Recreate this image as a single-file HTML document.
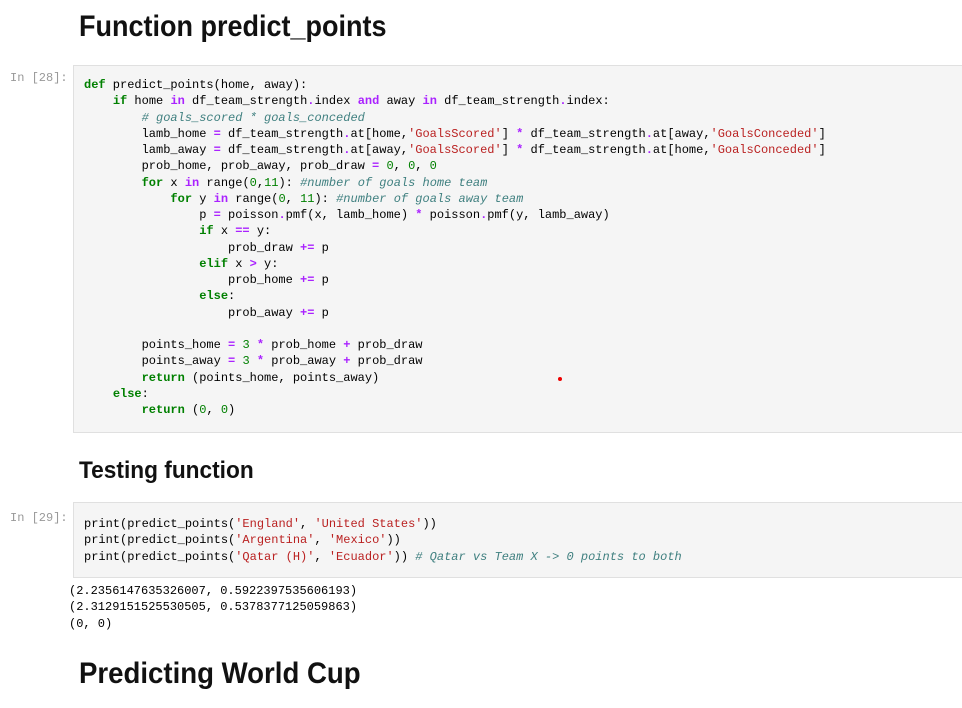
<!DOCTYPE html>
<html><head><meta charset="utf-8">
<style>
body{margin:0;width:962px;height:708px;background:#fff;position:relative;overflow:hidden;font-family:"Liberation Sans",sans-serif;}
.h{position:absolute;left:79px;font-weight:bold;color:#111;white-space:nowrap;transform-origin:0 0;}
.box{position:absolute;left:73px;right:-2px;background:#f5f5f5;border:1px solid #e0e0e0;}
pre{margin:0;font-family:"Liberation Mono",monospace;font-size:12px;line-height:16.25px;color:#000;}
.code{position:absolute;left:84px;}
.p{position:absolute;left:10px;font-family:"Liberation Mono",monospace;font-size:12px;color:#999;}
.k{color:#008000;font-weight:bold}
.o{color:#aa22ff;font-weight:bold}
.c{color:#408080;font-style:italic}
.s{color:#ba2121}
.n{color:#008000}
</style></head><body>
<div class="h" style="top:10px;font-size:30px;transform:scaleX(0.90)">Function predict_points</div>
<div class="p" style="top:71px">In [28]:</div>
<div class="box" style="top:65px;height:366px"></div>
<pre class="code" style="top:77px"><span class="k">def</span> predict_points(home, away):
    <span class="k">if</span> home <span class="o">in</span> df_team_strength<span class="o">.</span>index <span class="o">and</span> away <span class="o">in</span> df_team_strength<span class="o">.</span>index:
        <span class="c"># goals_scored * goals_conceded</span>
        lamb_home <span class="o">=</span> df_team_strength<span class="o">.</span>at[home,<span class="s">'GoalsScored'</span>] <span class="o">*</span> df_team_strength<span class="o">.</span>at[away,<span class="s">'GoalsConceded'</span>]
        lamb_away <span class="o">=</span> df_team_strength<span class="o">.</span>at[away,<span class="s">'GoalsScored'</span>] <span class="o">*</span> df_team_strength<span class="o">.</span>at[home,<span class="s">'GoalsConceded'</span>]
        prob_home, prob_away, prob_draw <span class="o">=</span> <span class="n">0</span>, <span class="n">0</span>, <span class="n">0</span>
        <span class="k">for</span> x <span class="o">in</span> range(<span class="n">0</span>,<span class="n">11</span>): <span class="c">#number of goals home team</span>
            <span class="k">for</span> y <span class="o">in</span> range(<span class="n">0</span>, <span class="n">11</span>): <span class="c">#number of goals away team</span>
                p <span class="o">=</span> poisson<span class="o">.</span>pmf(x, lamb_home) <span class="o">*</span> poisson<span class="o">.</span>pmf(y, lamb_away)
                <span class="k">if</span> x <span class="o">==</span> y:
                    prob_draw <span class="o">+=</span> p
                <span class="k">elif</span> x <span class="o">&gt;</span> y:
                    prob_home <span class="o">+=</span> p
                <span class="k">else</span>:
                    prob_away <span class="o">+=</span> p

        points_home <span class="o">=</span> <span class="n">3</span> <span class="o">*</span> prob_home <span class="o">+</span> prob_draw
        points_away <span class="o">=</span> <span class="n">3</span> <span class="o">*</span> prob_away <span class="o">+</span> prob_draw
        <span class="k">return</span> (points_home, points_away)
    <span class="k">else</span>:
        <span class="k">return</span> (<span class="n">0</span>, <span class="n">0</span>)</pre>
<div style="position:absolute;left:558px;top:377px;width:4px;height:4px;border-radius:50%;background:#e00"></div>
<div class="h" style="top:457px;font-size:24px;transform:scaleX(0.945)">Testing function</div>
<div class="p" style="top:511px">In [29]:</div>
<div class="box" style="top:502px;height:74px"></div>
<pre class="code" style="top:516px">print(predict_points(<span class="s">'England'</span>, <span class="s">'United States'</span>))
print(predict_points(<span class="s">'Argentina'</span>, <span class="s">'Mexico'</span>))
print(predict_points(<span class="s">'Qatar (H)'</span>, <span class="s">'Ecuador'</span>)) <span class="c"># Qatar vs Team X -&gt; 0 points to both</span></pre>
<pre class="code" style="top:583px;left:69px">(2.2356147635326007, 0.5922397535606193)
(2.3129151525530505, 0.5378377125059863)
(0, 0)</pre>
<div class="h" style="top:657px;font-size:30px;transform:scaleX(0.92)">Predicting World Cup</div>
</body></html>
